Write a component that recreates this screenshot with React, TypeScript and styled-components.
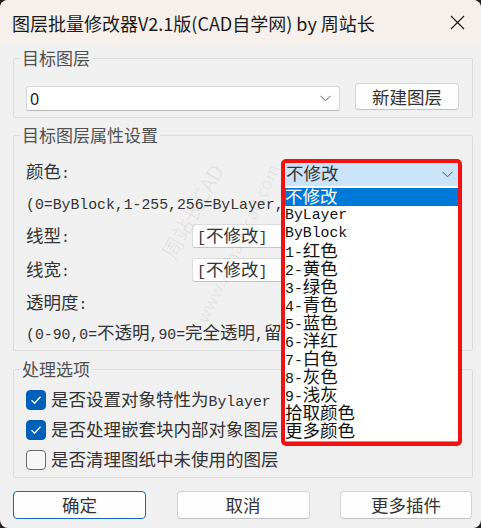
import React from "react";
import styled, { createGlobalStyle } from "styled-components";

const Global = createGlobalStyle`
  html, body { margin: 0; padding: 0; background: #1f1f1f; }
  body { width: 481px; height: 528px; overflow: hidden; }
  #root { width: 481px; height: 528px; }
`;

const Window = styled.div`
  width: 481px;
  height: 528px;
  background: #f0f0f0;
  border-radius: 8px;
  overflow: hidden;
  display: flex;
  flex-direction: column;
  font-family: "Noto Sans CJK SC", sans-serif;
  color: #333;
`;

const TitleBar = styled.div`
  height: 44px;
  flex: none;
  background: #f6f0ed;
  display: flex;
  align-items: center;
  justify-content: space-between;
  padding-left: 12px;
`;

const Title = styled.div`
  font-size: 18px;
  line-height: 24px;
  color: #1a1a1a;
  white-space: nowrap;
  margin-top: 1px;
`;

const CloseBtn = styled.div`
  width: 46px;
  height: 44px;
  display: flex;
  align-items: center;
  justify-content: center;
  margin-right: 1px;
`;

const Body = styled.div`
  flex: 1;
  display: flex;
  flex-direction: column;
  padding: 4px 8px 0 13px;
`;

const Group = styled.fieldset<{ $mt?: number; $pad: string }>`
  position: relative;
  margin: ${(p) => p.$mt ?? 0}px 0 0;
  padding: ${(p) => p.$pad};
  border: 1px solid #dadada;
  border-radius: 2px;
  min-width: 0;
`;

const Legend = styled.legend`
  margin-left: -6px;
  padding: 0 2px;
  font-size: 17px;
  line-height: 20px;
  color: #505050;
`;

const Han = styled.span`
  font-family: "Noto Sans CJK SC", sans-serif;
  font-size: 17.5px;
`;

const Mono = styled.span<{ $color?: string; $lh?: number }>`
  font-family: "Liberation Mono", "Noto Sans CJK SC", monospace;
  font-size: 14.8px;
  line-height: ${(p) => p.$lh ?? 20}px;
  white-space: nowrap;
  color: ${(p) => p.$color ?? "#333"};
`;

const HAN = /([\u2e80-\u9fff\u3000-\u303f\uff00-\uffef]+)/;
function Mixed({ text }: { text: string }) {
  return (
    <>
      {text.split(HAN).map((part, i) =>
        i % 2 ? <Han key={i}>{part}</Han> : <React.Fragment key={i}>{part}</React.Fragment>
      )}
    </>
  );
}

const Chevron = ({ color = "#606060" }: { color?: string }) => (
  <svg width="11" height="7" viewBox="0 0 11 7">
    <path d="M0.5 0.8 L5.5 5.8 L10.5 0.8" fill="none" stroke={color} strokeWidth="1" />
  </svg>
);

/* group 1 */
const LayerRow = styled.div`
  display: flex;
  align-items: flex-start;
  gap: 15px;
`;

const LayerCombo = styled.div`
  width: 314px;
  height: 25px;
  margin-top: 3px;
  box-sizing: border-box;
  background: #ffffff;
  border: 1px solid #d6d6d6;
  border-bottom-color: #b8b8b8;
  border-radius: 3px;
  display: flex;
  align-items: center;
  justify-content: space-between;
  padding: 0 8px 0 3px;
  font-family: "Noto Sans", sans-serif;
  font-size: 16px;
  color: #1a1a1a;
`;

const Button = styled.button<{ $w: number; $h: number; $primary?: boolean }>`
  width: ${(p) => p.$w}px;
  height: ${(p) => p.$h}px;
  box-sizing: border-box;
  padding: 0;
  background: #fdfdfd;
  border: 1px solid ${(p) => (p.$primary ? "#1469bd" : "#d3d3d3")};
  border-bottom-color: ${(p) => (p.$primary ? "#1469bd" : "#c2c2c2")};
  border-radius: 4px;
  font-family: "Noto Sans CJK SC", sans-serif;
  font-size: 17.5px;
  line-height: 20px;
  color: #333;
`;

/* group 2 */
const Rows = styled.div`
  display: flex;
  flex-direction: column;
`;

const Row = styled.div<{ $h: number }>`
  height: ${(p) => p.$h}px;
  display: flex;
  align-items: center;
`;

const Label = styled.div<{ $w?: number }>`
  width: ${(p) => (p.$w ? `${p.$w}px` : "auto")};
  flex: none;
  display: flex;
  align-items: center;
`;

const Combo = styled.div`
  flex: 1;
  height: 24px;
  box-sizing: border-box;
  background: #fdfdfd;
  border: 1px solid #dcdcdc;
  border-bottom-color: #c4c4c4;
  border-radius: 3px;
  display: flex;
  align-items: center;
  padding-left: 4px;
`;

const ColorSlot = styled.div`
  position: relative;
  width: 173px;
  height: 23px;
  margin-left: auto;
  align-self: flex-start;
  margin-top: 6px;
`;

const Popup = styled.div`
  position: absolute;
  top: 0;
  left: 0;
  right: 0;
  z-index: 10;
  background: #ffffff;
  outline: 4px solid #f01212;
  border-radius: 1px;
  display: flex;
  flex-direction: column;
`;

const Field = styled.div`
  height: 23px;
  background: #cce4f7;
  display: flex;
  align-items: center;
  justify-content: space-between;
  padding: 0 5px 0 1px;
`;

const List = styled.div`
  display: flex;
  flex-direction: column;
  padding: 2px 0 1px;
  border-bottom: 1px solid #7ea6cf;
`;

const Item = styled.div<{ $sel?: boolean }>`
  height: 18px;
  display: flex;
  align-items: center;
  background: ${(p) => (p.$sel ? "#0078d7" : "transparent")};
`;

const Watermark = styled.span<{ $size: number; $rot: number }>`
  position: absolute;
  z-index: 1;
  pointer-events: none;
  white-space: nowrap;
  transform: translate(-50%, -50%) rotate(${(p) => p.$rot}deg);
  font-family: "Noto Sans CJK SC", sans-serif;
  font-size: ${(p) => p.$size}px;
  color: rgba(0, 0, 0, 0.065);
`;

/* group 3 */
const CheckRow = styled.label`
  height: 30px;
  display: flex;
  align-items: center;
  gap: 5px;
`;

const Box = styled.span<{ $on: boolean }>`
  width: 20px;
  height: 20px;
  box-sizing: border-box;
  flex: none;
  border-radius: 4px;
  background: ${(p) => (p.$on ? "#005fb8" : "#f6f6f6")};
  border: 1px solid ${(p) => (p.$on ? "#005fb8" : "#6a6a6a")};
  display: flex;
  align-items: center;
  justify-content: center;
`;

const Footer = styled.div`
  margin-top: 13px;
  padding-right: 1px;
  display: flex;
  justify-content: space-between;
`;

const colors = [
  "不修改",
  "ByLayer",
  "ByBlock",
  "1-红色",
  "2-黄色",
  "3-绿色",
  "4-青色",
  "5-蓝色",
  "6-洋红",
  "7-白色",
  "8-灰色",
  "9-浅灰",
  "拾取颜色",
  "更多颜色",
];

function Check({ on, text }: { on: boolean; text: string }) {
  return (
    <CheckRow>
      <Box $on={on}>
        {on && (
          <svg width="14" height="14" viewBox="0 0 14 14">
            <path d="M2.5 7.2 L5.6 10.2 L11.5 3.8" fill="none" stroke="#fff" strokeWidth="1.3" />
          </svg>
        )}
      </Box>
      <Mono>
        <Mixed text={text} />
      </Mono>
    </CheckRow>
  );
}

export default function App() {
  return (
    <>
      <Global />
      <Window>
        <TitleBar>
          <Title>图层批量修改器V2.1版(CAD自学网) by 周站长</Title>
          <CloseBtn>
            <svg width="15" height="15" viewBox="0 0 15 15">
              <path d="M1 1 L14 14 M14 1 L1 14" stroke="#1c1c1c" strokeWidth="1.2" />
            </svg>
          </CloseBtn>
        </TitleBar>
        <Body>
          <Group $pad="15px 13px 6px 12px">
            <Legend>目标图层</Legend>
            <LayerRow>
              <LayerCombo>
                <span>0</span>
                <Chevron />
              </LayerCombo>
              <Button $w={104} $h={27}>新建图层</Button>
            </LayerRow>
          </Group>

          <Group $mt={7} $pad="12px 14px 3px 12px">
            <Legend>目标图层属性设置</Legend>
            <Watermark $size={21} $rot={-61} style={{ left: 178, top: 66 }}>
              周站长CAD
            </Watermark>
            <Watermark $size={17} $rot={-65} style={{ left: 223, top: 98 }}>
              www.zizhangcad.com
            </Watermark>
            <Rows>
              <Row $h={31}>
                <Label>
                  <Mono>
                    <Mixed text="颜色:" />
                  </Mono>
                </Label>
                <ColorSlot>
                  <Popup>
                    <Field>
                      <Mono>
                        <Mixed text="不修改" />
                      </Mono>
                      <Chevron color="#555" />
                    </Field>
                    <List>
                      {colors.map((c, i) => (
                        <Item key={c} $sel={i === 0}>
                          <Mono $lh={18} $color={i === 0 ? "#fff" : "#111"}>
                            <Mixed text={c} />
                          </Mono>
                        </Item>
                      ))}
                    </List>
                  </Popup>
                </ColorSlot>
              </Row>
              <Row $h={31}>
                <Mono>(0=ByBlock,1-255,256=ByLayer,<Han>不修改</Han>)</Mono>
              </Row>
              <Row $h={34}>
                <Label $w={166}>
                  <Mono>
                    <Mixed text="线型:" />
                  </Mono>
                </Label>
                <Combo>
                  <Mono>
                    <Mixed text="[不修改]" />
                  </Mono>
                </Combo>
              </Row>
              <Row $h={34}>
                <Label $w={166}>
                  <Mono>
                    <Mixed text="线宽:" />
                  </Mono>
                </Label>
                <Combo>
                  <Mono>
                    <Mixed text="[不修改]" />
                  </Mono>
                </Combo>
              </Row>
              <Row $h={32}>
                <Mono>
                  <Mixed text="透明度:" />
                </Mono>
              </Row>
              <Row $h={28}>
                <Mono>
                  <Mixed text="(0-90,0=不透明,90=完全透明,留空=不修改)" />
                </Mono>
              </Row>
            </Rows>
          </Group>

          <Group $mt={8} $pad="6px 14px 2px 12px">
            <Legend>处理选项</Legend>
            <Check on text="是否设置对象特性为Bylayer" />
            <Check on text="是否处理嵌套块内部对象图层" />
            <Check on={false} text="是否清理图纸中未使用的图层" />
          </Group>

          <Footer>
            <Button $w={133} $h={28} $primary>确定</Button>
            <Button $w={133} $h={28}>取消</Button>
            <Button $w={132} $h={28}>更多插件</Button>
          </Footer>
        </Body>
      </Window>
    </>
  );
}
